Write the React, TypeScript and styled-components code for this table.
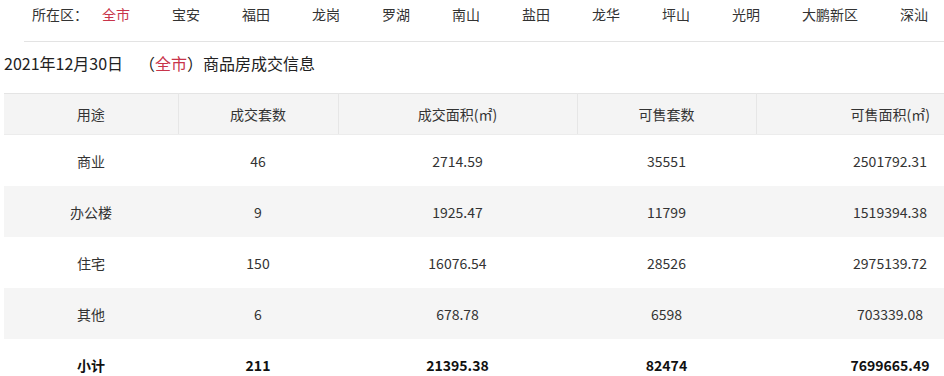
import React from "react";
import styled, { createGlobalStyle } from "styled-components";

const Global = createGlobalStyle`
  html, body { margin: 0; padding: 0; background: #fff; }
  body {
    font-family: "Noto Sans CJK SC", "Noto Sans", sans-serif;
    color: #333;
    overflow: hidden;
    width: 944px;
    height: 376px;
  }
`;

const RED = "#c8344a";

const Page = styled.div`
  width: 944px;
  height: 376px;
  overflow: hidden;
`;

const Nav = styled.div`
  display: flex;
  align-items: center;
  height: 28px;
  padding-left: 32px;
  font-size: 14px;
  line-height: 28px;
`;

const NavLabel = styled.span`
  margin-right: 14px;
  color: #333;
`;

const NavList = styled.div`
  display: flex;
  gap: 42px;
`;

const NavItem = styled.span<{ $active?: boolean }>`
  color: ${(p) => (p.$active ? RED : "#333")};
  white-space: nowrap;
`;

const Divider = styled.div`
  margin: 13px 0 0 24px;
  height: 1px;
  background: #e3e3e3;
`;

const Title = styled.div`
  display: flex;
  align-items: center;
  padding-left: 4px;
  height: 42px;
  font-size: 16px;
  color: #222;
`;

const DateText = styled.span`
  margin-right: 16px;
`;

const Red = styled.span`
  color: ${RED};
`;

const TableWrap = styled.div`
  margin-top: 9px;
  padding-left: 4px;
`;

const Table = styled.table`
  width: 1020px;
  border-collapse: collapse;
  table-layout: fixed;
  font-size: 14px;
  border-top: 1px solid #e4e4e4;
`;

const HeadCell = styled.th`
  height: 40px;
  padding: 0;
  font-weight: normal;
  text-align: center;
  background: #f4f4f4;
  color: #333;
  border-left: 1px solid #e6e6e6;
  border-bottom: 1px solid #ececec;
  &:first-child { border-left: none; }
`;

const Row = styled.tr<{ $shade?: boolean }>`
  background: ${(p) => (p.$shade ? "#f5f5f5" : "#fff")};
`;

const Cell = styled.td<{ $bold?: boolean }>`
  height: 51px;
  padding: 0;
  text-align: center;
  color: ${(p) => (p.$bold ? "#111" : "#333")};
  font-weight: ${(p) => (p.$bold ? 700 : 400)};
`;

const districts = [
  "全市", "宝安", "福田", "龙岗", "罗湖", "南山", "盐田",
  "龙华", "坪山", "光明", "大鹏新区", "深汕",
];

const headers = ["用途", "成交套数", "成交面积(㎡)", "可售套数", "可售面积(㎡)"];
const widths = [174, 160, 239, 179, 268];

const rows = [
  ["商业", "46", "2714.59", "35551", "2501792.31"],
  ["办公楼", "9", "1925.47", "11799", "1519394.38"],
  ["住宅", "150", "16076.54", "28526", "2975139.72"],
  ["其他", "6", "678.78", "6598", "703339.08"],
];

const total = ["小计", "211", "21395.38", "82474", "7699665.49"];

export default function App() {
  return (
    <Page>
      <Global />
      <Nav>
        <NavLabel>所在区：</NavLabel>
        <NavList>
          {districts.map((d, i) => (
            <NavItem key={d} $active={i === 0}>{d}</NavItem>
          ))}
        </NavList>
      </Nav>
      <Divider />
      <Title>
        <DateText>2021年12月30日</DateText>
        <span>
          （<Red>全市</Red>）商品房成交信息
        </span>
      </Title>
      <TableWrap>
        <Table>
          <colgroup>
            {widths.map((w, i) => (
              <col key={i} style={{ width: w }} />
            ))}
          </colgroup>
          <thead>
            <tr>
              {headers.map((h) => (
                <HeadCell key={h}>{h}</HeadCell>
              ))}
            </tr>
          </thead>
          <tbody>
            {rows.map((r, i) => (
              <Row key={r[0]} $shade={i % 2 === 1}>
                {r.map((c, j) => (
                  <Cell key={j}>{c}</Cell>
                ))}
              </Row>
            ))}
            <Row>
              {total.map((c, j) => (
                <Cell key={j} $bold>{c}</Cell>
              ))}
            </Row>
          </tbody>
        </Table>
      </TableWrap>
    </Page>
  );
}
